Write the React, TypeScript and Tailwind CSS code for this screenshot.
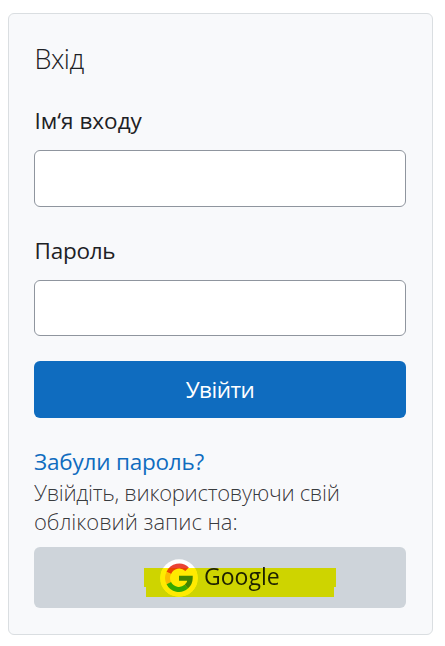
import { useState } from "react";

function GoogleLogo() {
  return (
    <svg viewBox="0 0 38 38" className="h-[38px] w-[38px] shrink-0" aria-hidden="true">
      <circle cx="19" cy="19" r="18.7" fill="#fff" />
      <circle cx="19" cy="19" r="18.7" fill="#ffea80" clipPath="inset(9px 0 0 0)" />
      <g fill="none" strokeWidth="5">
        <path d="M27.1 10.3 A11.3 11.3 0 0 0 8.8 13.9" stroke="#ea4335" />
        <path d="M8.8 13.9 A11.3 11.3 0 0 0 8.8 24.1" stroke="#fbbc05" />
        <path d="M8.8 24.1 A11.3 11.3 0 0 0 26.3 27.7" stroke="#34a853" />
        <path d="M26.3 27.7 A11.3 11.3 0 0 0 30.2 19.3 H19" stroke="#4285f4" />
      </g>
    </svg>
  );
}

interface FieldProps {
  id: string;
  label: string;
  type: string;
  labelClass: string;
  inputClass: string;
}

function Field({ id, label, type, labelClass, inputClass }: FieldProps) {
  const [value, setValue] = useState("");

  return (
    <div className="mt-7">
      <label htmlFor={id} className={`block h-[30px] pl-[0.5px] text-[22.5px] leading-8 text-[#1d2125] ${labelClass}`}>
        {label}
      </label>
      <input
        id={id}
        type={type}
        value={value}
        onChange={(e) => setValue(e.target.value)}
        className={`mt-[15px] block w-full rounded-md border border-[#8f959e] bg-white px-4 text-[22px] ${inputClass}`}
      />
    </div>
  );
}

export default function App() {
  return (
    <main className="h-[646px] bg-white pt-[13px] pl-2 font-['Open_Sans','Noto_Sans',sans-serif]">
      <form
        onSubmit={(e) => e.preventDefault()}
        className="h-[622px] w-[425px] rounded-md border border-[#dadee1] bg-[#f8f9fb] pt-[27px] pr-[26px] pl-[25px]"
      >
        <h1 className="h-9 pl-[0.5px] text-[27px] leading-9 font-light tracking-[-0.5px] text-[#1d2125]">Вхід</h1>
        <Field id="username" label="Ім‘я входу" type="text" labelClass="" inputClass="h-[57px]" />
        <Field id="password" label="Пароль" type="password" labelClass="tracking-[-0.25px]" inputClass="h-14" />
        <button type="submit" className="mt-[25px] h-[57px] w-full rounded-md bg-[#0f6cbf] text-[22.5px] tracking-[-0.5px] text-white">
          Увійти
        </button>
        <a href="#" className="mt-7 block h-8 text-[22.5px] leading-8 tracking-[-0.2px] text-[#0f6cbf]">
          Забули пароль?
        </a>
        <p className="text-[22px] leading-[29px] font-light text-[#1d2125]/90">
          <span className="tracking-[-0.3px]">Увійдіть, використовуючи свій</span>
          <br />
          <span className="tracking-[-0.05px]">обліковий запис на:</span>
        </p>
        <button
          type="button"
          className="relative isolate mt-[11px] flex h-[61px] w-full items-center rounded-md bg-[#ced4da] pl-[126px] text-[23px] text-[#1d2125]"
        >
          <GoogleLogo />
          <span className="ml-1.5 pb-0.5">Google</span>
          <svg
            viewBox="0 0 192 29"
            className="absolute top-[21px] left-[110px] h-[29px] w-[192px] mix-blend-multiply"
            aria-hidden="true"
          >
            <path d="M0 0H192V19H190V29H2V19H0Z" fill="#ffff00" />
          </svg>
        </button>
      </form>
    </main>
  );
}
